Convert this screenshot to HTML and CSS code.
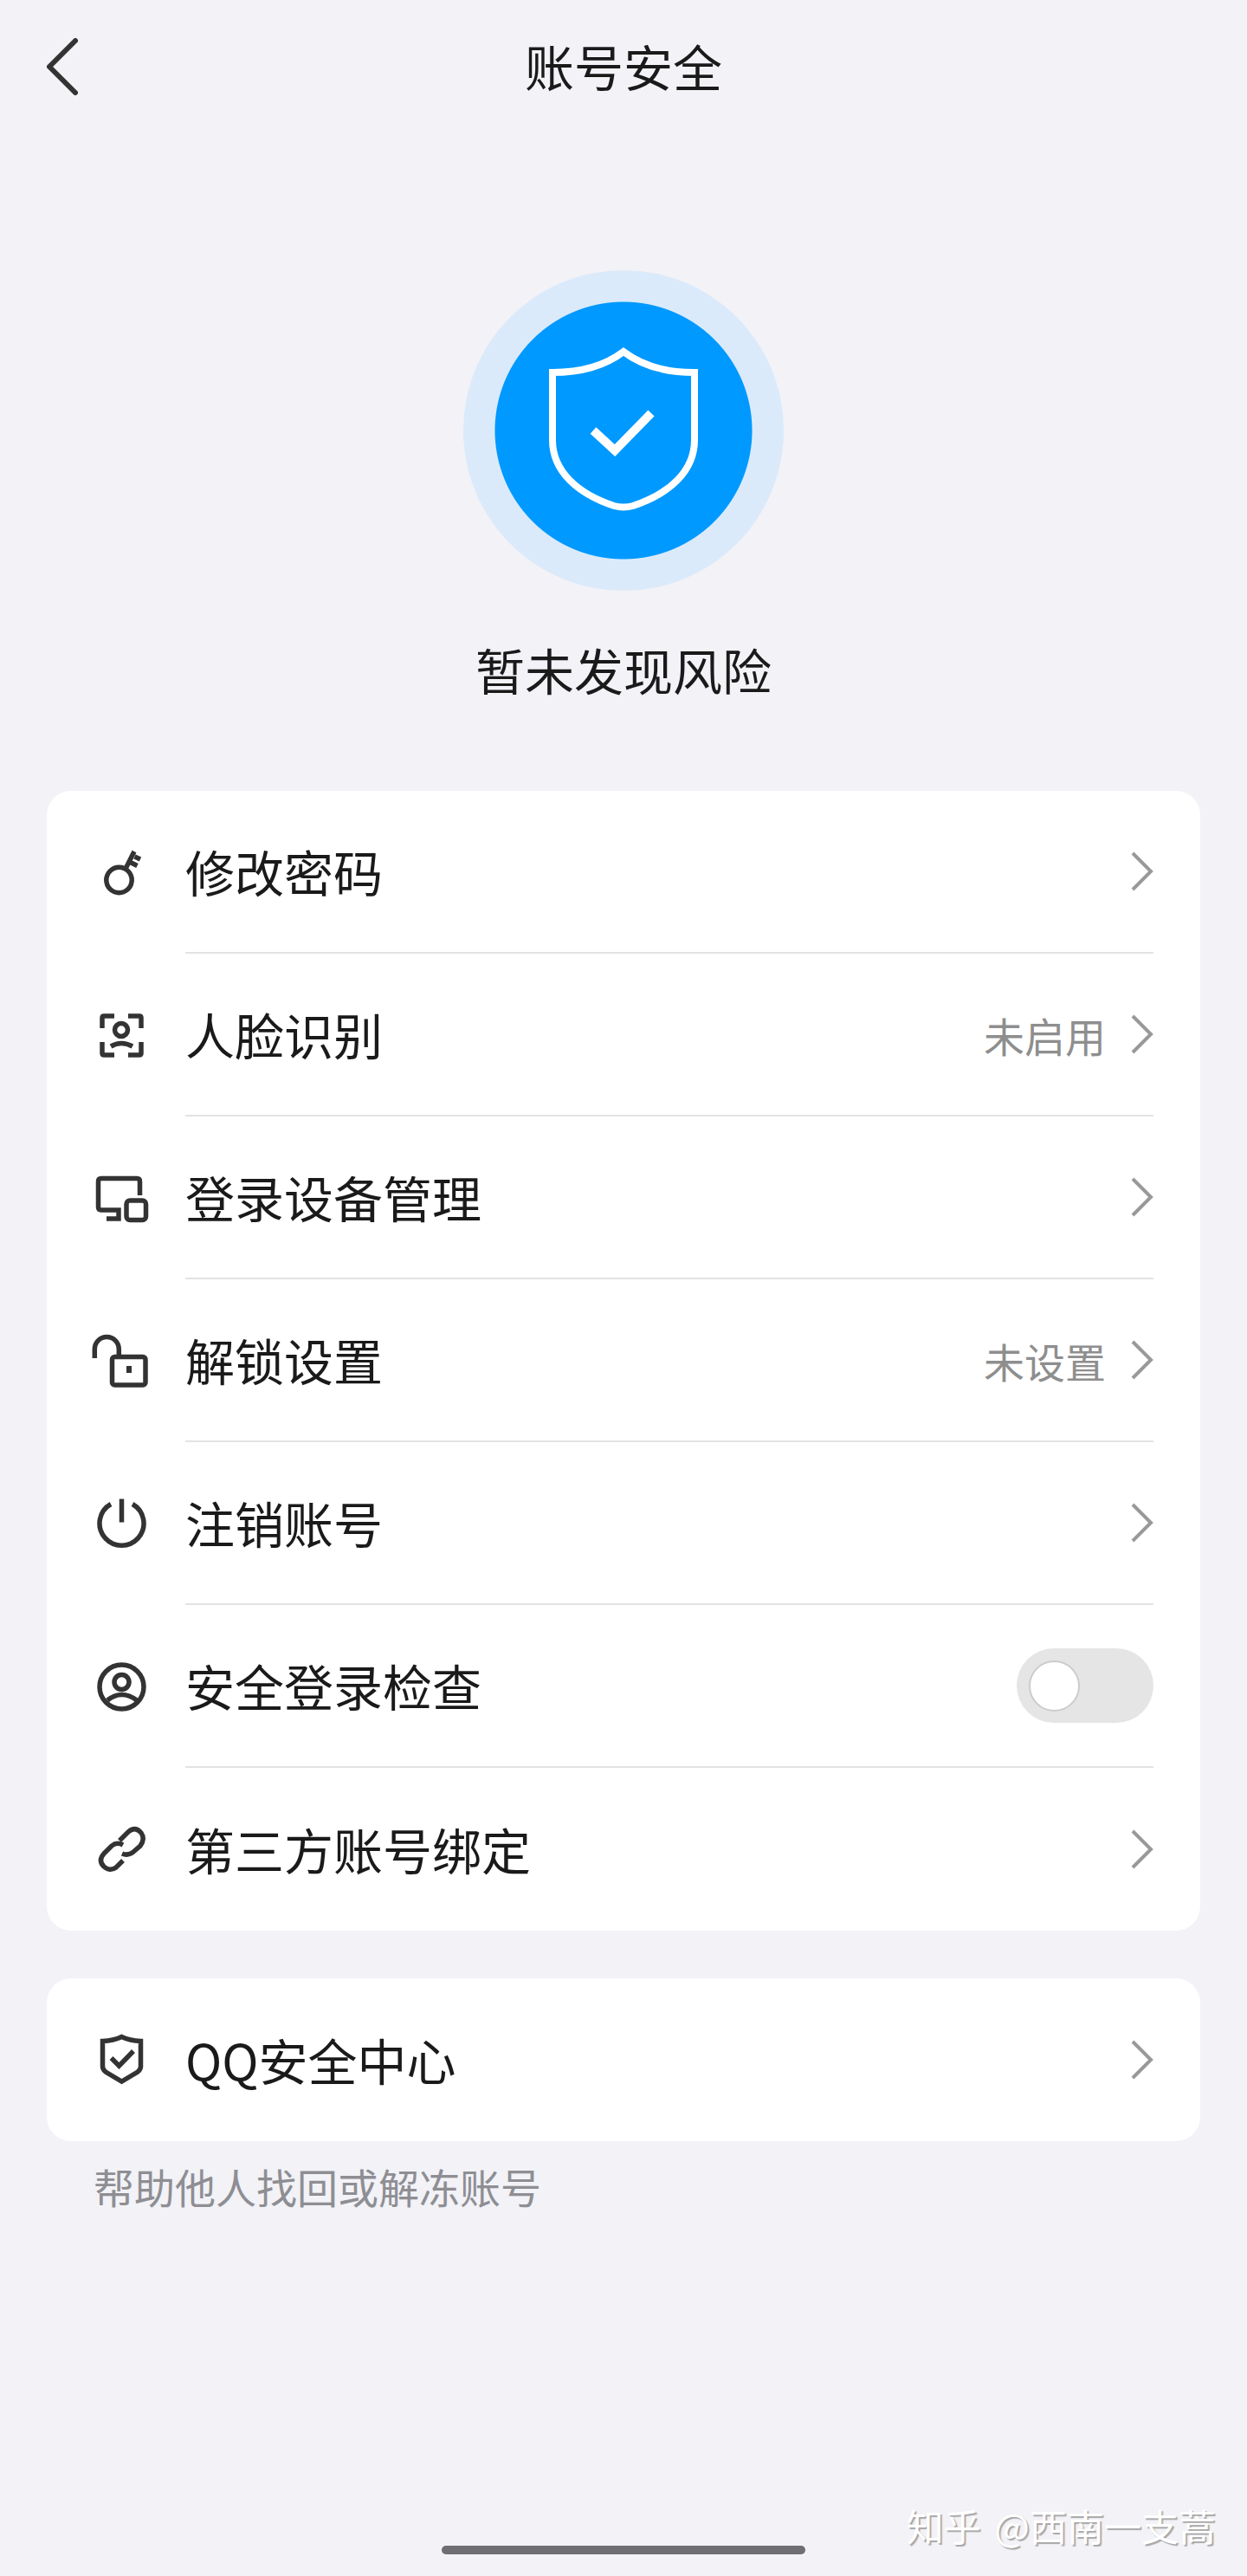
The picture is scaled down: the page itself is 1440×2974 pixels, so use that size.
FILE: index.html
```html
<!DOCTYPE html>
<html lang="zh-CN">
<head>
    <meta charset="UTF-8">
    <meta name="viewport" content="width=device-width, initial-scale=1.0">
    <title>账号安全</title>
    <link rel="stylesheet" href="styles.css">
</head>
<body>
    <div class="page">
        <header class="nav">
            <svg class="nav-back" viewBox="0 0 36 66"><path d="M33 3 L3 33 L33 63"/></svg>
            <h1 class="nav-title">账号安全</h1>
        </header>

        <section class="status">
            <div class="status-ring">
                <svg class="status-shield" viewBox="0 0 370 370">
                    <path d="M185 94 C164 110 136 118 103 118 V196 C103 232 132 258 174 272 Q185 275 196 272 C238 258 267 232 267 196 V118 C234 118 206 110 185 94 Z"/>
                    <path class="status-check" d="M150 185 L175 208 L217 165"/>
                </svg>
            </div>
            <p class="status-text">暂未发现风险</p>
        </section>

        <div class="card">
            <div class="row">
                <svg class="icon" viewBox="0 0 60 60">
                    <circle cx="27.5" cy="39" r="14.7"/>
                    <path d="M35 26 L45 6 M45.500 12 L52 15 M41.500 19 L48.500 22.500"/>
                </svg>
                <div class="row-body">
                    <span class="row-label">修改密码</span>
                    <svg class="chevron" viewBox="0 0 26 46"><path d="M2 2 L23 23 L2 44"/></svg>
                </div>
            </div>
            <div class="row">
                <svg class="icon" viewBox="0 0 60 60">
                    <path d="M8 22 V10 Q8 8 10 8 H22 M38 8 H51 Q53 8 53 10 V22 M8 38 V51 Q8 53 10 53 H22 M53 38 V51 Q53 53 51 53 H38"/>
                    <circle cx="30" cy="24" r="7.5"/>
                    <path d="M18 43 Q30 36 43 43"/>
                </svg>
                <div class="row-body">
                    <span class="row-label">人脸识别</span>
                    <span class="row-value">未启用</span>
                    <svg class="chevron" viewBox="0 0 26 46"><path d="M2 2 L23 23 L2 44"/></svg>
                </div>
            </div>
            <div class="row">
                <svg class="icon" viewBox="0 0 60 60">
                    <path d="M51.500 27 V11 Q51.500 7.500 48 7.500 H7 Q3.500 7.500 3.500 11 V40.500 Q3.500 44 7 44 H27 V54 H13"/>
                    <rect x="36" y="33" width="22.500" height="22.500" rx="4"/>
                </svg>
                <div class="row-body">
                    <span class="row-label">登录设备管理</span>
                    <svg class="chevron" viewBox="0 0 26 46"><path d="M2 2 L23 23 L2 44"/></svg>
                </div>
            </div>
            <div class="row">
                <svg class="icon" viewBox="0 0 60 60">
                    <path d="M-0.700 27 V16.500 A14 14 0 0 1 27.300 16.500 V23"/>
                    <rect x="19.500" y="25.500" width="38.500" height="32.500" rx="3"/>
                    <rect class="icon-solid" x="36" y="36" width="6" height="8"/>
                </svg>
                <div class="row-body">
                    <span class="row-label">解锁设置</span>
                    <span class="row-value">未设置</span>
                    <svg class="chevron" viewBox="0 0 26 46"><path d="M2 2 L23 23 L2 44"/></svg>
                </div>
            </div>
            <div class="row">
                <svg class="icon" viewBox="0 0 60 60">
                    <path d="M18 7.500 A25.500 25.500 0 1 0 43 7.500"/>
                    <path d="M30.500 1.500 V28.500"/>
                </svg>
                <div class="row-body">
                    <span class="row-label">注销账号</span>
                    <svg class="chevron" viewBox="0 0 26 46"><path d="M2 2 L23 23 L2 44"/></svg>
                </div>
            </div>
            <div class="row">
                <svg class="icon" viewBox="0 0 60 60">
                    <circle cx="30.500" cy="30.500" r="25.500"/>
                    <circle cx="30.500" cy="25" r="8.500"/>
                    <path d="M14 46 Q30.500 33 48 46"/>
                </svg>
                <div class="row-body">
                    <span class="row-label">安全登录检查</span>
                    <div class="toggle"><div class="toggle-knob"></div></div>
                </div>
            </div>
            <div class="row">
                <svg class="icon" viewBox="0 0 60 60">
                    <path d="M28 20 L38 10 Q46 3 53 11 Q58 18 52 26 L44 33 Q38 38 31 35"/>
                    <path d="M32 25 Q25 21 19 26 L10 35 Q3 43 10 50 Q17 56 24 51 L32 43"/>
                </svg>
                <div class="row-body">
                    <span class="row-label">第三方账号绑定</span>
                    <svg class="chevron" viewBox="0 0 26 46"><path d="M2 2 L23 23 L2 44"/></svg>
                </div>
            </div>
        </div>

        <div class="card card-second">
            <div class="row">
                <svg class="icon" viewBox="0 0 60 60">
                    <path d="M30.500 3.500 Q40 8 52.500 8.500 V38 Q52.500 41 49 44 L30.500 55 L12 44 Q8.500 41 8.500 38 V8.500 Q21 8 30.500 3.500 Z"/>
                    <path d="M18.500 28 L27.500 37 L44 20"/>
                </svg>
                <div class="row-body">
                    <span class="row-label">QQ安全中心</span>
                    <svg class="chevron" viewBox="0 0 26 46"><path d="M2 2 L23 23 L2 44"/></svg>
                </div>
            </div>
        </div>
        <p class="help">帮助他人找回或解冻账号</p>

        <div class="watermark">知乎 @西南一支蒿</div>
        <div class="home-bar"></div>
    </div>
</body>
</html>
```

FILE: styles.css
```css
body {
    margin: 0;
    background: #f2f2f7;
    color: #1a1a1a;
    font-family: "Noto Sans CJK SC", "Noto Sans", sans-serif;
}
.page {
    position: relative;
    height: 2974px;
    overflow: hidden;
}
.nav {
    display: flex;
    align-items: center;
    justify-content: center;
    position: relative;
    height: 150px;
}
.nav-back {
    position: absolute;
    left: 54px;
    top: 44px;
    width: 36px;
    height: 66px;
    fill: none;
    stroke: #333333;
    stroke-width: 6;
    stroke-linecap: round;
    stroke-linejoin: round;
}
.nav-title {
    margin: 0;
    font-size: 57px;
    font-weight: 400;
    line-height: 80px;
}
.status {
    display: flex;
    flex-direction: column;
    align-items: center;
    padding-top: 162px;
}
.status-ring {
    display: flex;
    width: 370px;
    height: 370px;
    border-radius: 50%;
    background: radial-gradient(circle, #0099ff 148px, #dbeafa 149px);
}
.status-shield {
    width: 370px;
    height: 370px;
    fill: none;
    stroke: #ffffff;
    stroke-width: 8;
}
.status-check {
    stroke-width: 10;
}
.status-text {
    margin: 50px 0 0;
    font-size: 57px;
    line-height: 80px;
}
.card {
    margin: 101px 54px 0;
    background: #ffffff;
    border-radius: 28px;
}
.card-second {
    margin-top: 55px;
}
.row {
    display: flex;
    align-items: center;
    height: 188px;
    padding: 0 54px 0 56px;
}
.icon {
    flex: none;
    width: 60px;
    height: 60px;
    margin-right: 44px;
    overflow: visible;
    fill: none;
    stroke: #333333;
    stroke-width: 5.5;
}
.icon-solid {
    fill: #333333;
    stroke: none;
}
.row-body {
    flex: 1;
    display: flex;
    align-items: center;
    align-self: stretch;
}
.row:not(:last-child) .row-body {
    border-bottom: 2px solid #e3e3e5;
}
.row-label {
    flex: 1;
    padding-bottom: 3px;
    font-size: 57px;
    line-height: 80px;
}
.row-value {
    margin-right: 29px;
    color: #8e8e8e;
    font-size: 47px;
}
.chevron {
    width: 26px;
    height: 46px;
    fill: none;
    stroke: #999999;
    stroke-width: 4;
}
.toggle {
    display: flex;
    align-items: center;
    width: 158px;
    height: 86px;
    padding-left: 14px;
    box-sizing: border-box;
    border-radius: 43px;
    background: #e5e5e5;
}
.toggle-knob {
    width: 59px;
    height: 59px;
    box-sizing: border-box;
    border: 2px solid #cccccc;
    border-radius: 50%;
    background: #ffffff;
}
.help {
    margin: 22px 0 0 108px;
    color: #8e8e93;
    font-size: 47px;
    line-height: 60px;
}
.watermark {
    position: absolute;
    right: 36px;
    top: 2886px;
    color: #ffffff;
    font-size: 43px;
    line-height: 58px;
    word-spacing: 6px;
    text-shadow: 2px 2px 1px #a8a8a8;
}
.home-bar {
    position: absolute;
    left: 510px;
    top: 2939px;
    width: 420px;
    height: 10px;
    border-radius: 5px;
    background: #6e6e73;
}
```
